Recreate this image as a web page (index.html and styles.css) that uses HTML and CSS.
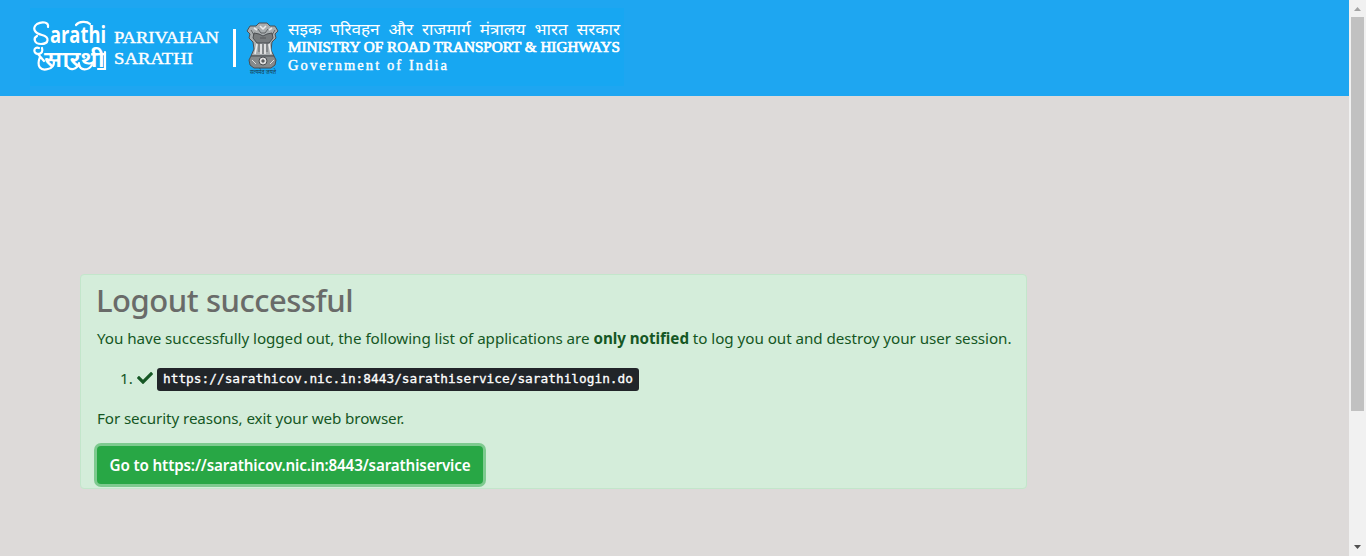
FILE: index.html
```html
<!DOCTYPE html>
<html lang="en">
<head>
<meta charset="utf-8">
<title>Logout successful</title>
<link rel="stylesheet" href="styles.css">
</head>
<body>
<div class="page">
  <header class="banner">
    <svg class="brand" width="640" height="96" viewBox="0 0 640 96" role="img" aria-label="Parivahan Sarathi">
      <rect x="30" y="8" width="594" height="78" fill="#17a7f2"/>
      <g fill="#fff">
        <text class="logo-text" x="50" y="43" font-size="24" textLength="56" lengthAdjust="spacingAndGlyphs">arathi</text>
        <text class="logo-hindi" x="44" y="67" font-size="22" textLength="61" lengthAdjust="spacingAndGlyphs">सारथी</text>
      </g>
      <g fill="none" stroke="#fff" stroke-width="2.2" stroke-linecap="round">
        <path d="M48 27C49 22 42 21 37 24C32 28 34 33 42 35C50 37 49 44 41 44C34 44 33 38 37 36"/>
        <path d="M39 48C33 46 33 54 38 54C42 54 43 51 42 48M38 54L44 61M40 57C36 67 41 71 48 69C53 68 54 64 54 62M67 66C70 71 77 70 79 63M79 64C80 71 88 71 92 65M98 69H105V52M76 25C79 21 87 21 90 24"/>
      </g>
      <g fill="#fff">
        <text class="serif" x="114" y="43" font-size="17" textLength="105" lengthAdjust="spacingAndGlyphs">PARIVAHAN</text>
        <text class="serif" x="114" y="64" font-size="17" textLength="79" lengthAdjust="spacingAndGlyphs">SARATHI</text>
        <rect x="233" y="29" width="3" height="38"/>
        <text class="hindi" x="288" y="35" font-size="15.5" textLength="332" lengthAdjust="spacingAndGlyphs" word-spacing="4">सइक परिवहन और राजमार्ग मंत्रालय भारत सरकार</text>
        <text class="serif heavy" x="288" y="52" font-size="14" textLength="332" lengthAdjust="spacingAndGlyphs">MINISTRY OF ROAD TRANSPORT &amp; HIGHWAYS</text>
        <text class="serif" x="288" y="70" font-size="14.5" textLength="159">Government of India</text>
      </g>
      <g stroke="#4b4f52" stroke-width="1" stroke-linejoin="round">
        <path fill="#a8adaf" d="M256 26L259 23H267L270 26L275 26L278 31L275 34L276 38L272 42L271 50L274 56H251L254 49L253 42L249 38L250 34L247 31L250 26Z"/>
        <path fill="#777b7d" d="M254 33L259 34L263 36L267 34L272 33L273 38L269 43H257L253 38Z"/>
        <path fill="none" stroke="#ececec" stroke-width="1.6" d="M257 44L255 54M261 44V54M265 44V54M269 44L271 54M254 28L257 30M272 28L269 30M260 26L263 29L266 26"/>
        <path fill="none" stroke-width=".8" d="M259 43V52M263 44V54M267 43V52M258 29L261 33H265L268 29M251 30L254 35M275 30L272 35M260 38H266"/>
        <path fill="#858a8c" d="M251 56H274L276 60L275 65L271 68H254L250 65L249 60Z"/>
        <circle cx="263" cy="61" r="4" fill="#ddd"/>
        <circle cx="263" cy="61" r="1.2" fill="#777"/>
        <path d="M252 60L256 64M274 60L270 64" fill="none" stroke="#ddd"/>
      </g>
      <text class="hindi" x="250" y="74" font-size="6" fill="#173b50" textLength="26" lengthAdjust="spacingAndGlyphs">सत्यमेव जयते</text>
    </svg>
  </header>
  <main class="content">
    <section class="alert">
      <h2 class="title">Logout successful</h2>
      <p class="message">You have successfully logged out, the following list of applications are <strong>only notified</strong> to log you out and destroy your user session.</p>
      <div class="entry">
        <span class="number">1.</span>
        <svg class="check" width="16" height="16" viewBox="0 0 512 512" aria-hidden="true"><path fill="currentColor" d="M174 439L8 272c-10-10-10-26 0-36l36-36c10-10 26-10 36 0l112 112L432 72c10-10 26-10 36 0l36 36c10 10 10 26 0 36L210 439c-10 10-26 10-36 0z"/></svg>
        <code class="url">https://sarathicov.nic.in:8443/sarathiservice/sarathilogin.do</code>
      </div>
      <p class="security">For security reasons, exit your web browser.</p>
      <a class="button" href="#">Go to https://sarathicov.nic.in:8443/sarathiservice</a>
    </section>
  </main>
</div>
<div class="scrollbar" aria-hidden="true">
  <svg class="arrow" width="17" height="17"><path d="M5 11L8.5 7L12 11Z" fill="#a3a3a3"/></svg>
  <div class="thumb"></div>
  <svg class="arrow arrow-down" width="17" height="17"><path d="M5 6H12L8.5 10Z" fill="#505050"/></svg>
</div>
</body>
</html>
```
FILE: styles.css
```css
* { box-sizing: border-box; }
body {
  margin: 0;
  display: flex;
  height: 556px;
  overflow: hidden;
  background: #dddad9;
  font: 15.2px/24px "Noto Sans", "Open Sans", sans-serif;
  color: #155724;
}
.page { flex: 1; }
.banner { height: 96px; background: #1ea6f1; }
.brand { display: block; }
.serif { font-family: "Liberation Serif", serif; stroke: #fff; stroke-width: .4px; }
.heavy { stroke-width: .65px; }
.hindi, .logo-hindi { font-family: "Noto Sans Devanagari", "Noto Sans", sans-serif; }
.logo-text { font-family: "Open Sans", sans-serif; font-weight: 700; }
.logo-hindi { font-weight: 600; }
.content { padding: 178px 0 0 80px; }
.alert {
  width: 947px;
  height: 215px;
  padding: 7px 15px 4px 16px;
  border: 1px solid #c3e6cb;
  border-radius: 4px;
  background: #d4edda;
  white-space: nowrap;
}
.title {
  margin: 0 0 7px -1px;
  font-size: 31px;
  line-height: 37px;
  font-weight: 500;
  letter-spacing: -.45px;
  color: #696b69;
}
.message { margin: 0 0 16px; letter-spacing: -.045px; }
.entry { display: flex; align-items: center; height: 24px; padding-left: 23px; }
.number { width: 17px; }
.check { margin-right: 4px; }
.url {
  height: 23px;
  margin-top: 2px;
  padding: 0 6px;
  border-radius: 3px;
  background: #212529;
  color: #fff;
  font: 12.8px/22px "DejaVu Sans Mono", monospace;
  -webkit-text-stroke: .3px #fff;
}
.security { margin: 16px 0; letter-spacing: -.09px; }
.button {
  display: block;
  width: 386px;
  height: 38px;
  border-radius: 4px;
  background: #28a745;
  box-shadow: 0 0 0 3px #7eca8f;
  color: #fff;
  font-weight: 600;
  letter-spacing: -.14px;
  line-height: 38px;
  text-align: center;
  text-decoration: none;
}
.scrollbar { display: flex; flex-direction: column; width: 17px; background: #f1f1f1; }
.arrow { display: block; }
.arrow-down { margin-top: auto; }
.thumb { width: 13px; height: 394px; margin-left: 2px; background: #c1c1c1; }
```
